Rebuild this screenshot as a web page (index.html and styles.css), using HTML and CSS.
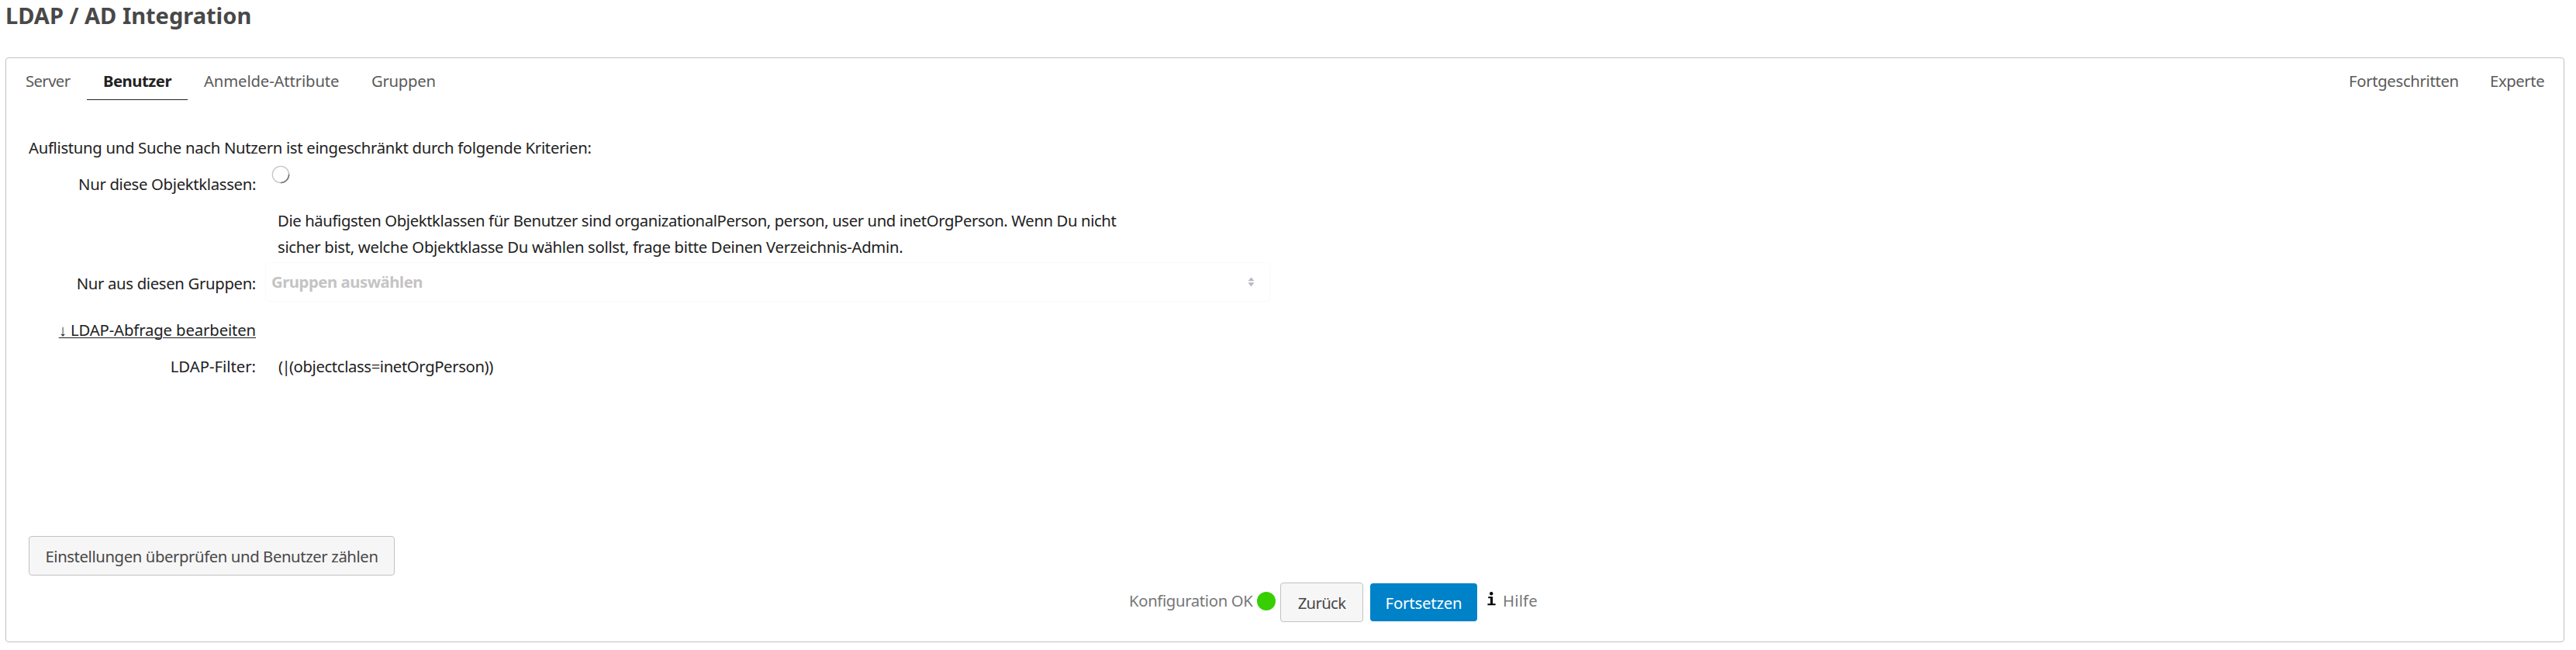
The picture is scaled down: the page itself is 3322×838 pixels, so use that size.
FILE: index.html
```
<!DOCTYPE html>
<html lang="de">
<head>
<meta charset="utf-8">
<title>LDAP / AD Integration</title>
<link rel="stylesheet" href="styles.css">
</head>
<body>
<h1 class="title">LDAP / AD Integration</h1>
<main class="panel">
  <nav class="tabs">
    <a class="tab tab-server">Server</a>
    <a class="tab tab-users active">Benutzer</a>
    <a class="tab tab-login">Anmelde-Attribute</a>
    <a class="tab tab-groups">Gruppen</a>
    <a class="tab tab-advanced">Fortgeschritten</a>
    <a class="tab tab-expert">Experte</a>
  </nav>
  <section class="content">
    <p class="intro">Auflistung und Suche nach Nutzern ist eingeschränkt durch folgende Kriterien:</p>
    <div class="row row-classes">
      <label class="label">Nur diese Objektklassen:</label>
      <svg class="spinner" width="24" height="24" viewBox="0 0 24 24" fill="none"><circle cx="12" cy="12" r="10.7" stroke="#c6c6c6" stroke-width="1.3"/><path d="M22.6 11.5A10.7 10.7 0 0 1 12 22.7" stroke="#777" stroke-width="1.5"/></svg>
    </div>
    <div class="row row-help">
      <p class="help"><span class="help-a">Die häufigsten Objektklassen für Benutzer sind organizationalPerson, person, user und inetOrgPerson. Wenn Du nicht</span><br><span class="help-b">sicher bist, welche Objektklasse Du wählen sollst, frage bitte Deinen Verzeichnis-Admin.</span></p>
    </div>
    <div class="row row-groups">
      <label class="label">Nur aus diesen Gruppen:</label>
      <div class="select"><span>Gruppen auswählen</span>
        <svg width="9" height="13" viewBox="0 0 9 13" fill="#b4b9bf"><path d="M4.5 .5L8.5 5.2H.5zM4.5 12.5L8.5 7.2H.5z"/></svg>
      </div>
    </div>
    <div class="row row-edit"><a class="label link">↓ LDAP-Abfrage bearbeiten</a></div>
    <div class="row row-filter">
      <label class="label filter-label">LDAP-Filter:</label>
      <span class="filter"><span class="operator">(|</span>(objectclass=inetOrgPerson))</span>
    </div>
    <button class="button count">Einstellungen überprüfen und Benutzer zählen</button>
  </section>
  <footer class="controls">
    <span class="status">Konfiguration OK</span>
    <span class="dot"></span>
    <button class="button back">Zurück</button>
    <button class="button primary">Fortsetzen</button>
    <svg class="info" width="11" height="18" viewBox="0 0 11 18" fill="#000"><circle cx="5.2" cy="2.2" r="2.2"/><path d="M1.2 6.3H7v9h3.6v2H.4v-2H4V8.2H1.2z"/></svg>
    <a class="hilfe">Hilfe</a>
  </footer>
</main>
</body>
</html>
```
FILE: styles.css
```
* { box-sizing: border-box; }
body {
  margin: 0;
  background: #fff;
  color: #222;
  font: 20.3px/34px "Noto Sans", "Open Sans", sans-serif;
  white-space: nowrap;
}
p { margin: 0; }
.title {
  height: 40px;
  margin: 0 0 34px;
  padding-left: 7px;
  font-size: 29px;
  line-height: 40px;
  font-weight: 700;
  color: #484848;
}
.panel {
  width: 3300px;
  height: 754px;
  margin-left: 7px;
  border: 1px solid #c2c2c2;
  border-radius: 4px;
}
.tabs { display: flex; height: 54px; padding: 12px 4px 0; }
.tab {
  height: 42px;
  padding: 0 0 0 21px;
  border-bottom: 1px solid transparent;
  color: #5a5a5a;
}
.tab.active { color: #222; font-weight: 700; border-color: #222; }
.tab-server { width: 100px; letter-spacing: -.6px; }
.tab-users { width: 130px; letter-spacing: -.49px; }
.tab-login { width: 216px; letter-spacing: -.13px; }
.tab-groups { letter-spacing: -.28px; }
.tab-advanced { width: 182px; margin-left: auto; letter-spacing: -.32px; }
.tab-expert { width: 112px; letter-spacing: -.4px; }

.content { padding: 44px 0 0 29px; }
.intro { height: 34px; letter-spacing: -.3px; }
.row { display: grid; grid-template-columns: 293px 1fr; column-gap: 12px; align-items: start; }
.label { justify-self: end; letter-spacing: -.32px; }
.row-classes { height: 60px; padding-top: 6px; }
.row-classes .label { margin-top: 7px; }
.spinner { margin-left: 8px; }
.row-help { height: 71px; }
.help { grid-column: 2; padding-left: 16px; }
.help-a { letter-spacing: -.39px; }
.help-b { letter-spacing: -.3px; }
.row-groups { height: 70px; }
.row-groups .label { margin-top: 10px; }
.select {
  display: flex;
  justify-content: space-between;
  align-items: center;
  width: 1296px;
  height: 51px;
  padding: 0 19px 2px 7px;
  border: 1px solid #fafafa;
  border-radius: 4px;
  color: #c4c4c4;
  font-weight: 700;
  letter-spacing: -.45px;
}
.select svg { margin-top: 2px; }
.row-edit { height: 47px; }
.link { letter-spacing: -.12px; text-decoration: underline; text-underline-offset: 2px; text-decoration-thickness: 1px; }
.filter-label { letter-spacing: 0; }
.filter { padding-left: 17px; letter-spacing: -.38px; }
.operator { letter-spacing: -1.7px; }
.row-filter { height: 236px; }
.button {
  display: block;
  height: 51px;
  padding: 1px 0 0;
  border: 1px solid #c2c2c2;
  border-radius: 4px;
  background: #f6f6f6;
  color: #484848;
  font: inherit;
}
.count { width: 472px; letter-spacing: -.39px; }
.controls { display: flex; align-items: flex-start; padding: 9px 0 0 1448px; color: #777; }
.status { width: 165px; margin-top: 6px; letter-spacing: -.34px; }
.dot { width: 24px; height: 24px; margin-top: 12px; border-radius: 50%; background: #37ce02; }
.back { width: 107px; margin-left: 6px; letter-spacing: -.65px; }
.primary { width: 138px; height: 49px; margin: 1px 0 0 9px; border: 0; background: #0082c9; color: #fff; letter-spacing: -.17px; }
.info { margin: 12px 0 0 13px; }
.hilfe { margin: 6px 0 0 9px; letter-spacing: .2px; }
```
